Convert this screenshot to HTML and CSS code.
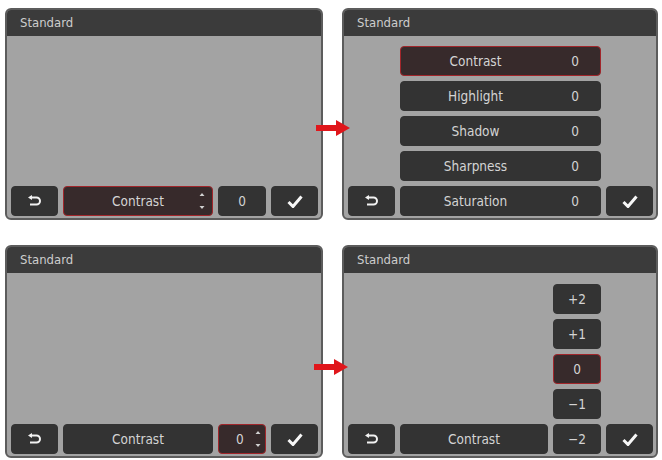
FILE: index.html
```html
<!DOCTYPE html>
<html lang="en">
<head>
    <meta charset="UTF-8">
    <meta name="viewport" content="width=device-width, initial-scale=1.0">
    <title>Film Style - Contrast</title>
    <link rel="stylesheet" href="styles.css">
</head>
<body>
    <div class="sheet">
        <!-- 1: parameter bar, Contrast selected -->
        <section class="screen">
            <header class="screen-title">Standard</header>
            <div class="screen-body rows-1">
                <div class="key bar key-icon">
                    <svg width="16" height="12" viewBox="0 0 16 12"><path d="M3 2.5h6.5a3.5 3.5 0 0 1 0 7H3" fill="none" stroke="#f2f2f2" stroke-width="2"/><path d="M1 2.5 5 0v5z" fill="#f2f2f2"/></svg>
                </div>
                <div class="key bar selected">Contrast
                    <svg class="spin" width="6" height="18" viewBox="0 0 6 18"><path d="M3 1 5.5 4h-5zM3 17 .5 14h5z" fill="#cfcfcf"/></svg>
                </div>
                <div class="key bar">0</div>
                <div class="key bar key-icon">
                    <svg width="16" height="13" viewBox="0 0 16 13"><path d="M1.5 7 6 11.5 14.5 1.5" fill="none" stroke="#f7f7f7" stroke-width="3"/></svg>
                </div>
            </div>
        </section>

        <!-- 2: parameter list -->
        <section class="screen">
            <header class="screen-title">Standard</header>
            <div class="screen-body rows-5">
                <div class="key item selected"><span>Contrast</span><span>0</span></div>
                <div class="key item"><span>Highlight</span><span>0</span></div>
                <div class="key item"><span>Shadow</span><span>0</span></div>
                <div class="key item"><span>Sharpness</span><span>0</span></div>
                <div class="key bar key-icon">
                    <svg width="16" height="12" viewBox="0 0 16 12"><path d="M3 2.5h6.5a3.5 3.5 0 0 1 0 7H3" fill="none" stroke="#f2f2f2" stroke-width="2"/><path d="M1 2.5 5 0v5z" fill="#f2f2f2"/></svg>
                </div>
                <div class="key item bar"><span>Saturation</span><span>0</span></div>
                <div class="key bar key-icon">
                    <svg width="16" height="13" viewBox="0 0 16 13"><path d="M1.5 7 6 11.5 14.5 1.5" fill="none" stroke="#f7f7f7" stroke-width="3"/></svg>
                </div>
            </div>
        </section>

        <!-- 3: parameter bar, value selected -->
        <section class="screen">
            <header class="screen-title">Standard</header>
            <div class="screen-body rows-1">
                <div class="key bar key-icon">
                    <svg width="16" height="12" viewBox="0 0 16 12"><path d="M3 2.5h6.5a3.5 3.5 0 0 1 0 7H3" fill="none" stroke="#f2f2f2" stroke-width="2"/><path d="M1 2.5 5 0v5z" fill="#f2f2f2"/></svg>
                </div>
                <div class="key bar">Contrast</div>
                <div class="key bar selected value-key">0
                    <svg class="spin" width="6" height="18" viewBox="0 0 6 18"><path d="M3 1 5.5 4h-5zM3 17 .5 14h5z" fill="#cfcfcf"/></svg>
                </div>
                <div class="key bar key-icon">
                    <svg width="16" height="13" viewBox="0 0 16 13"><path d="M1.5 7 6 11.5 14.5 1.5" fill="none" stroke="#f7f7f7" stroke-width="3"/></svg>
                </div>
            </div>
        </section>

        <!-- 4: value list -->
        <section class="screen">
            <header class="screen-title">Standard</header>
            <div class="screen-body rows-5">
                <div class="key step">+2</div>
                <div class="key step">+1</div>
                <div class="key step selected">0</div>
                <div class="key step">−1</div>
                <div class="key bar key-icon">
                    <svg width="16" height="12" viewBox="0 0 16 12"><path d="M3 2.5h6.5a3.5 3.5 0 0 1 0 7H3" fill="none" stroke="#f2f2f2" stroke-width="2"/><path d="M1 2.5 5 0v5z" fill="#f2f2f2"/></svg>
                </div>
                <div class="key bar">Contrast</div>
                <div class="key bar">−2</div>
                <div class="key bar key-icon">
                    <svg width="16" height="13" viewBox="0 0 16 13"><path d="M1.5 7 6 11.5 14.5 1.5" fill="none" stroke="#f7f7f7" stroke-width="3"/></svg>
                </div>
            </div>
        </section>

        <svg class="arrow arrow-top" width="36" height="18" viewBox="0 0 36 18"><path d="M1 6h20V1l14 8-14 8v-5H1z" fill="#e0161b"/></svg>
        <svg class="arrow arrow-bottom" width="36" height="18" viewBox="0 0 36 18"><path d="M1 6h20V1l14 8-14 8v-5H1z" fill="#e0161b"/></svg>
    </div>
</body>
</html>
```

FILE: styles.css
```css
:root {
    --panel-bg: #a3a3a3;
    --bar-bg: #3b3b3b;
    --key-bg: #333333;
    --key-text: #d4d4d4;
    --accent: #a1262b;
}

* {
    margin: 0;
    padding: 0;
    box-sizing: border-box;
}

body {
    background: #ffffff;
    font-family: "DejaVu Sans Condensed", "DejaVu Sans", sans-serif;
    font-stretch: condensed;
}

.sheet {
    position: relative;
    display: grid;
    grid-template-columns: 318px 316px;
    grid-template-rows: 212px 213px;
    column-gap: 19px;
    row-gap: 25px;
    padding: 8px 0 0 5px;
}

.screen {
    display: flex;
    flex-direction: column;
    background: var(--panel-bg);
    border: 2px solid #5c5c5c;
    border-radius: 6px;
    overflow: hidden;
}

.screen-title {
    height: 26px;
    line-height: 25px;
    padding-left: 13px;
    background: var(--bar-bg);
    color: #cdcdcd;
    font-size: 13px;
}

.screen-body {
    flex: 1;
    display: grid;
    grid-template-columns: 47px 1fr 48px 47px;
    column-gap: 5px;
    row-gap: 5px;
    align-content: end;
    padding: 0 3px 2px 4px;
}

.rows-1 {
    grid-template-rows: 30px;
}

.rows-5 {
    grid-template-rows: repeat(5, 30px);
}

.key {
    position: relative;
    display: flex;
    align-items: center;
    justify-content: center;
    background: var(--key-bg);
    border: 1.5px solid var(--key-bg);
    border-radius: 4px;
    color: var(--key-text);
    font-size: 13.5px;
}

.bar {
    grid-row: -2;
}

.key.selected {
    background: #372a2b;
    border-color: var(--accent);
}

.spin {
    position: absolute;
    right: 7px;
    top: 5px;
}

.value-key {
    justify-content: flex-start;
    padding-left: 17px;
}

.value-key .spin {
    right: 4px;
}

.item {
    grid-column: 2 / 4;
    display: grid;
    grid-template-columns: 1fr 50px;
    justify-items: center;
}

.step {
    grid-column: 3;
}

.arrow {
    position: absolute;
}

.arrow-top {
    left: 315px;
    top: 119px;
}

.arrow-bottom {
    left: 313px;
    top: 358px;
}
```
